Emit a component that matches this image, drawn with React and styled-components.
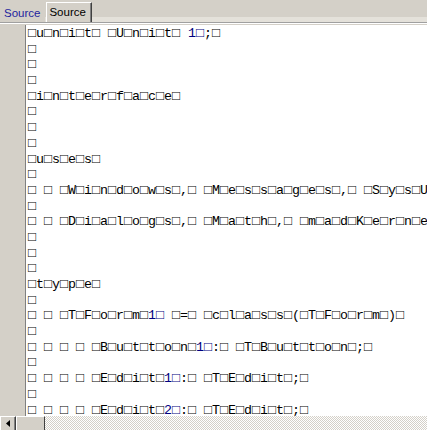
import styled, { createGlobalStyle } from 'styled-components'

const NUL = '\u25A1'

// wide text read as ansi: a box before every char, one at the end
const wide = s => s.split('').map(c => NUL + c).join('') + NUL

const lines = [
    `${NUL}u${NUL}n${NUL}i${NUL}t${NUL} ${NUL}U${NUL}n${NUL}i${NUL}t${NUL} 1${NUL};${NUL}`,
    NUL,
    NUL,
    NUL,
    wide('interface'),
    NUL,
    NUL,
    NUL,
    wide('uses'),
    NUL,
    wide('  Windows, Messages, SysUtils, Variants, Classes, Graphics, Controls, Forms,'),
    NUL,
    wide('  Dialogs, Math, madKernel, StdCtrls;'),
    NUL,
    NUL,
    NUL,
    wide('type'),
    NUL,
    wide('  TForm1 = class(TForm)'),
    NUL,
    wide('    Button1: TButton;'),
    NUL,
    wide('    Edit1: TEdit;'),
    NUL,
    wide('    Edit2: TEdit;'),
    NUL,
    wide('    procedure Button1Click(Sender: TObject);'),
]

const GlobalStyle = createGlobalStyle`
    html, body {
        margin: 0;
        padding: 0;
        background: #D4D0C8;
        overflow: hidden;
    }
`

const Janela = styled.div`
    width: 427px;
    height: 430px;
    display: flex;
    flex-direction: column;
    background: #D4D0C8;
    overflow: hidden;
`

const BarraAbas = styled.div`
    height: 22px;
    display: flex;
    align-items: flex-end;
    flex-shrink: 0;
    box-shadow: inset 0 -5px 0 #E4E1DA;
`

const Aba = styled.div`
    box-sizing: border-box;
    height: ${props => props.ativa ? '20px' : '18px'};
    padding: ${props => props.ativa ? '2px 5px 0 2px' : '2px 5px 0 4px'};
    font-family: "Liberation Sans", Arial, sans-serif;
    font-size: 11.5px;
    line-height: 15px;
    color: ${props => props.ativa ? '#000' : '#1E1E9E'};
    background: #D4D0C8;
    border-top: ${props => props.ativa ? '1px solid #fff' : 'none'};
    border-left: ${props => props.ativa ? '1px solid #fff' : 'none'};
    border-right: ${props => props.ativa ? '1px solid #404040' : 'none'};
    box-shadow: ${props => props.ativa ? 'inset -1px 0 0 #808080' : 'none'};
    margin-left: ${props => props.ativa ? '1px' : '0'};
`

const Moldura = styled.div`
    flex: 1;
    display: flex;
    flex-direction: column;
    border-top: 1px solid #A0A0A0;
    box-shadow: inset 0 1px 0 #fff;
    padding-top: 2px;
    min-height: 0;
`

const Editor = styled.div`
    flex: 1;
    display: flex;
    min-height: 0;
    overflow: hidden;
`

const Calha = styled.div`
    width: 25px;
    flex-shrink: 0;
    background: #D4D0C8;
    border-right: 1px solid #808080;
`

const Codigo = styled.div`
    flex: 1;
    background: #fff;
    padding: 1px 0 0 2px;
    overflow: hidden;
    font-family: "Liberation Mono", "Courier New", monospace;
    font-size: 13.333px;
    line-height: 15.7px;
    color: #000;
    white-space: pre;
`

const Linha = styled.div`
    height: 15.7px;
`

const Numero = styled.span`
    color: #000080;
`

const Rolagem = styled.div`
    height: 14px;
    display: flex;
    flex-shrink: 0;
`

const BotaoSeta = styled.div`
    width: 16px;
    box-sizing: border-box;
    display: flex;
    align-items: center;
    justify-content: center;
    background: #D4D0C8;
    border-top: 1px solid #fff;
    border-left: 1px solid #fff;
    border-right: 1px solid #404040;
    box-shadow: inset -1px 0 0 #808080;
`

const Polegar = styled.div`
    width: 29px;
    box-sizing: border-box;
    background: #D4D0C8;
    border-top: 1px solid #fff;
    border-left: 1px solid #fff;
    border-right: 1px solid #404040;
`

const Trilho = styled.div`
    flex: 1;
    background-image: conic-gradient(#D4D0C8 25%, #fff 0 50%, #D4D0C8 0 75%, #fff 0);
    background-size: 2px 2px;
`

function LinhaCodigo({ texto }) {
    const partes = texto.split(/(\d\u25A1)/)
    return (
        <Linha>
            {partes.map((p, i) => /^\d\u25A1$/.test(p) ? <Numero key={i}>{p}</Numero> : p)}
        </Linha>
    )
}

export default function App() {
    return (
        <Janela>
            <GlobalStyle />
            <BarraAbas>
                <Aba>Source</Aba>
                <Aba ativa>Source</Aba>
            </BarraAbas>
            <Moldura>
                <Editor>
                    <Calha />
                    <Codigo>
                        {lines.map((l, i) => <LinhaCodigo key={i} texto={l} />)}
                    </Codigo>
                </Editor>
                <Rolagem>
                    <BotaoSeta>
                        <svg width="4" height="7" viewBox="0 0 4 7">
                            <path d="M4 0 L0 3.5 L4 7 Z" fill="#000" />
                        </svg>
                    </BotaoSeta>
                    <Polegar />
                    <Trilho />
                </Rolagem>
            </Moldura>
        </Janela>
    )
}
